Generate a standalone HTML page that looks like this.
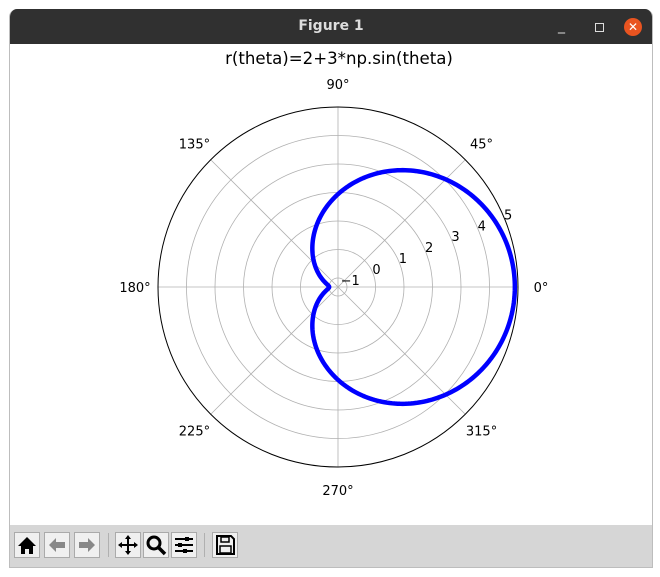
<!DOCTYPE html>
<html><head><style>
body{margin:0;width:660px;height:577px;background:#fff;overflow:hidden;font-family:"Liberation Sans","DejaVu Sans",sans-serif}
#win{position:absolute;left:9px;top:9px;width:642px;height:558px;border:1px solid #bdbdbd;border-top:none;border-radius:8px 8px 0 0;overflow:hidden;background:#fff}
#tb{position:absolute;left:0;top:0;width:642px;height:35px;background:#303030;color:#ddd;font-weight:bold;font-size:14px;text-align:center;line-height:35px;font-family:"DejaVu Sans",sans-serif}
#bar{position:absolute;left:0;top:516px;width:642px;height:42px;background:#d6d6d6}
.btn{position:absolute;top:7px;width:26px;height:26px;background:#f0f0f0;border:1px solid #aaa;box-sizing:border-box}
.sep{position:absolute;top:8px;width:1px;height:24px;background:#b0b0b0}
</style></head><body>
<div id="win">
<div id="tb">Figure 1
<span style="position:absolute;left:548px;top:0;color:#ddd;font-weight:normal">_</span>
<span style="position:absolute;left:585px;top:14px;width:7px;height:7px;border:1px solid #ddd"></span>
<span style="position:absolute;left:614px;top:9px;width:18px;height:18px;border-radius:50%;background:#e95420;color:#fff;font-size:12px;line-height:18px">✕</span>
</div>
<div id="bar">
<div class="btn" style="left:4px"><svg width="24" height="24"><path d="M3 13 L12 4 L21 13 L18 13 L18 21 L14 21 L14 16 L10 16 L10 21 L6 21 L6 13Z" fill="#000"/></svg></div>
<div class="btn" style="left:34px"><svg width="24" height="24"><path d="M4 12 L11 5 L11 9 L20 9 L20 15 L11 15 L11 19Z" fill="#888"/></svg></div>
<div class="btn" style="left:64px"><svg width="24" height="24"><path d="M20 12 L13 5 L13 9 L4 9 L4 15 L13 15 L13 19Z" fill="#888"/></svg></div>
<div class="sep" style="left:98px"></div>
<div class="btn" style="left:105px"><svg width="24" height="24"><path d="M12 2 L15 6 L13 6 L13 11 L18 11 L18 9 L22 12 L18 15 L18 13 L13 13 L13 18 L15 18 L12 22 L9 18 L11 18 L11 13 L6 13 L6 15 L2 12 L6 9 L6 11 L11 11 L11 6 L9 6Z" fill="#000"/></svg></div>
<div class="btn" style="left:133px"><svg width="24" height="24"><circle cx="10" cy="10" r="6" fill="none" stroke="#000" stroke-width="3"/><path d="M14 14 L21 21" stroke="#000" stroke-width="3.5"/></svg></div>
<div class="btn" style="left:161px"><svg width="24" height="24"><path d="M3 6H21M3 12H21M3 18H21" stroke="#000" stroke-width="2"/><rect x="13" y="4" width="4" height="4"/><rect x="6" y="10" width="4" height="4"/><rect x="11" y="16" width="4" height="4"/></svg></div>
<div class="sep" style="left:194px"></div>
<div class="btn" style="left:202px"><svg width="24" height="24"><path d="M4 3H18L21 6V21H4Z" fill="none" stroke="#000" stroke-width="2"/><rect x="8" y="4" width="8" height="5" fill="none" stroke="#000" stroke-width="1.5"/><rect x="7" y="13" width="11" height="7" fill="none" stroke="#000" stroke-width="1.5"/></svg></div>
</div>
</div>
<svg id="plot" width="660" height="577" style="position:absolute;left:0;top:0" font-family="DejaVu Sans, Liberation Sans, sans-serif" font-size="13"></svg>
<script>
var s=document.getElementById('plot'),cx=338,cy=287,R=180,u=28.5,uc=28.0,r0=-1.316,h='';
h+='<text x="339" y="64" text-anchor="middle" font-size="16.6">r(theta)=2+3*np.sin(theta)</text>';
for(var k=-1;k<=4;k++){var rr=(k-r0)*u;h+='<circle cx="'+cx+'" cy="'+cy+'" r="'+rr+'" fill="none" stroke="#b0b0b0" stroke-width="0.8"/>';}
for(var a=0;a<360;a+=45){var t=a*Math.PI/180;h+='<line x1="'+cx+'" y1="'+cy+'" x2="'+(cx+R*Math.cos(t))+'" y2="'+(cy-R*Math.sin(t))+'" stroke="#b0b0b0" stroke-width="0.8"/>';
var lx=cx+203*Math.cos(t),ly=cy-203*Math.sin(t)+5;h+='<text x="'+lx+'" y="'+ly+'" text-anchor="middle">'+a+'°</text>';}
h+='<circle cx="'+cx+'" cy="'+cy+'" r="'+R+'" fill="none" stroke="#000" stroke-width="1"/>';
var t2=22.5*Math.PI/180;
for(var k=-1;k<=5;k++){var rr=(k-r0)*u+2;h+='<text x="'+(cx+rr*Math.cos(t2)+2)+'" y="'+(cy-rr*Math.sin(t2)+2)+'" text-anchor="middle">'+(k<0?'−1':k)+'</text>';}
var d='';for(var i=0;i<=360;i++){var t=i*Math.PI/180,r=((2+3*Math.cos(t))-r0)*uc;d+=(i?'L':'M')+(cx+r*Math.cos(t)).toFixed(2)+' '+(cy-r*Math.sin(t)).toFixed(2);}
h+='<path d="'+d+'" fill="none" stroke="#0000ff" stroke-width="4.5" stroke-linejoin="round"/>';
s.innerHTML=h;
</script>
</body></html>
